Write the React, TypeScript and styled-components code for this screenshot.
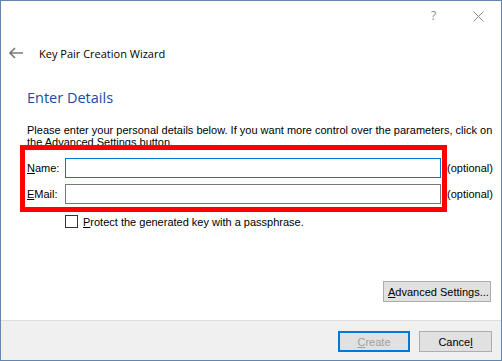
import React from 'react';
import styled, { createGlobalStyle } from 'styled-components';

const GlobalStyle = createGlobalStyle`
  html, body {
    margin: 0;
    padding: 0;
    background: #ffffff;
  }
  body {
    font-family: 'Liberation Sans', Arial, sans-serif;
    font-size: 11px;
    color: #000000;
  }
`;

const Window = styled.div`
  position: relative;
  width: 502px;
  height: 361px;
  box-sizing: border-box;
  border: 1px solid #6087ad;
  background: #ffffff;
  display: flex;
  flex-direction: column;
  overflow: hidden;
`;

const Caption = styled.div`
  height: 30px;
  display: flex;
  justify-content: flex-end;
`;

const CaptionButton = styled.div`
  width: 45px;
  height: 30px;
  display: flex;
  align-items: center;
  justify-content: center;
  color: #7a7a7a;
`;

const HelpGlyph = styled.span`
  font-family: 'Open Sans', sans-serif;
  font-size: 12px;
  color: #8a8a8a;
  margin-top: -2px;
`;

const Header = styled.div`
  height: 44px;
  display: flex;
  align-items: center;
  padding-left: 8px;
`;

const Title = styled.span`
  margin-left: 15px;
  font-family: 'Open Sans', sans-serif;
  font-size: 11px;
  color: #000000;
`;

const Content = styled.div`
  flex: 1;
  display: flex;
  flex-direction: column;
  padding: 0 10px 0 26px;
`;

const Heading = styled.div`
  margin-top: 13px;
  font-family: 'Open Sans', sans-serif;
  font-size: 14.5px;
  line-height: 20px;
  color: #1a4ca6;
`;

const Intro = styled.p`
  margin: 16px 0 0;
  line-height: 12px;
  white-space: nowrap;
`;

const FormGrid = styled.div`
  margin-top: 10px;
  display: grid;
  grid-template-columns: 38px 376px auto;
  row-gap: 6px;
  align-items: center;
`;

const Label = styled.label`
  line-height: 20px;
`;

const Key = styled.span`
  text-decoration: underline;
`;

const Field = styled.div<{ focused?: boolean }>`
  height: 20px;
  box-sizing: border-box;
  border: 1px solid ${p => (p.focused ? '#0078d7' : '#7a7a7a')};
  background: #ffffff;
`;

const Hint = styled.span`
  margin-left: 6px;
`;

const CheckRow = styled.div`
  margin: 11px 0 0 38px;
  display: flex;
  align-items: center;
  gap: 5px;
`;

const Box = styled.div`
  width: 13px;
  height: 13px;
  box-sizing: border-box;
  border: 1px solid #333333;
  background: #ffffff;
`;

const Spacer = styled.div`
  flex: 1;
`;

const AdvancedRow = styled.div`
  display: flex;
  justify-content: flex-end;
  margin-bottom: 18px;
`;

const Button = styled.button<{ isDefault?: boolean; disabled?: boolean }>`
  height: 21px;
  box-sizing: border-box;
  padding: 0 4px;
  white-space: nowrap;
  font-family: 'Liberation Sans', Arial, sans-serif;
  font-size: 11px;
  background: #e1e1e1;
  color: ${p => (p.disabled ? '#a0a0a0' : '#000000')};
  border: ${p => (p.isDefault ? '2px solid #0078d7' : '1px solid #adadad')};
  border-radius: 0;
`;

const Footer = styled.div`
  height: 40px;
  box-sizing: border-box;
  border-top: 1px solid #dfdfdf;
  background: #f0f0f0;
  display: flex;
  justify-content: flex-end;
  align-items: flex-start;
  gap: 9px;
  padding: 10px 9px 0 0;
`;

const Highlight = styled.div`
  position: absolute;
  left: 19px;
  top: 144px;
  width: 427px;
  height: 67px;
  box-sizing: border-box;
  border: 5px solid #ff0000;
  pointer-events: none;
`;

const BackArrow = () => (
  <svg width="15" height="12" viewBox="0 0 15 12">
    <path d="M6 1 L1 6 L6 11 M1 6 H14" fill="none" stroke="#7a7a7a" strokeWidth="1.6" />
  </svg>
);

const CloseIcon = () => (
  <svg width="11" height="11" viewBox="0 0 11 11">
    <path d="M0.5 0.5 L10.5 10.5 M10.5 0.5 L0.5 10.5" stroke="#8a8a8a" strokeWidth="1" />
  </svg>
);

export default function App() {
  return (
    <>
      <GlobalStyle />
      <Window>
        <Caption>
          <CaptionButton>
            <HelpGlyph>?</HelpGlyph>
          </CaptionButton>
          <CaptionButton>
            <CloseIcon />
          </CaptionButton>
        </Caption>

        <Header>
          <BackArrow />
          <Title>Key Pair Creation Wizard</Title>
        </Header>

        <Content>
          <Heading>Enter Details</Heading>
          <Intro>
            Please enter your personal details below. If you want more control over the parameters, click on
            <br />
            the Advanced Settings button.
          </Intro>

          <FormGrid>
            <Label>
              <Key>N</Key>ame:
            </Label>
            <Field focused />
            <Hint>(optional)</Hint>
            <Label>
              <Key>E</Key>Mail:
            </Label>
            <Field />
            <Hint>(optional)</Hint>
          </FormGrid>

          <CheckRow>
            <Box />
            <span>
              <Key>P</Key>rotect the generated key with a passphrase.
            </span>
          </CheckRow>

          <Spacer />

          <AdvancedRow>
            <Button style={{ width: 108 }}>
              <Key>A</Key>dvanced Settings...
            </Button>
          </AdvancedRow>
        </Content>

        <Footer>
          <Button isDefault disabled style={{ width: 72 }}>
            <Key>C</Key>reate
          </Button>
          <Button style={{ width: 73 }}>
            Cance<Key>l</Key>
          </Button>
        </Footer>

        <Highlight />
      </Window>
    </>
  );
}
